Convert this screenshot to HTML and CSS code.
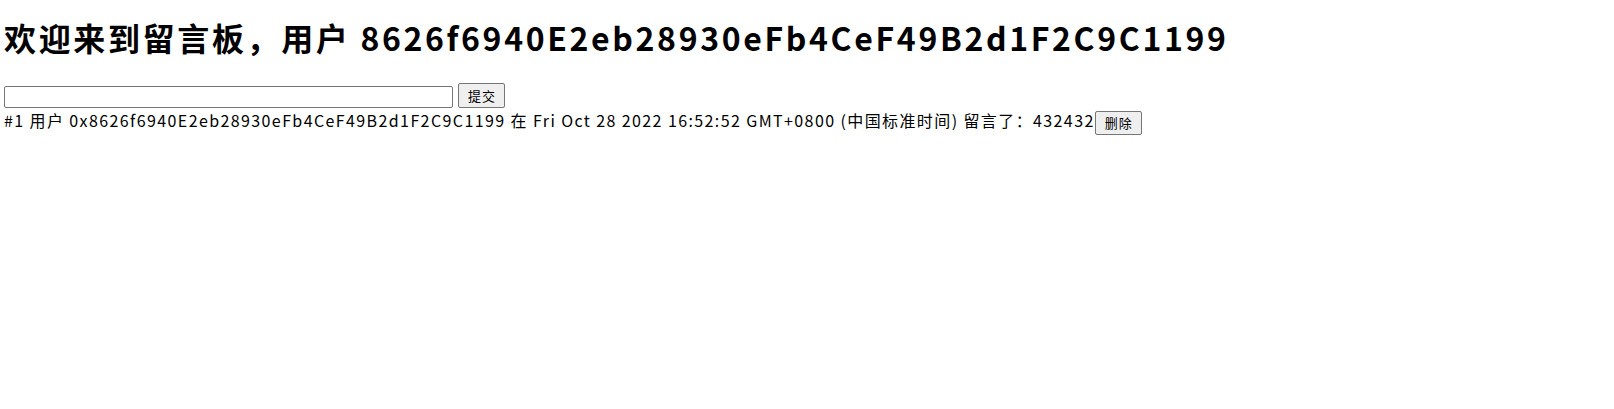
FILE: index.html
```html
<!DOCTYPE html>
<html lang="zh-CN">
<head>
<meta charset="utf-8">
<title>留言板</title>
<link rel="stylesheet" href="styles.css">
</head>
<body>
<h1 class="title">欢迎来到留言板，用户 8626f6940E2eb28930eFb4CeF49B2d1F2C9C1199</h1>
<div class="form-row"><input class="msg-input" type="text"><button class="btn" type="button">提交</button></div>
<div class="msg-list">
<div class="msg">#1 用户 0x8626f6940E2eb28930eFb4CeF49B2d1F2C9C1199 在 Fri Oct 28 2022 16:52:52 GMT+0800 (中国标准时间) 留言了：432432<button class="btn" type="button">删除</button></div>
</div>
</body>
</html>
```
FILE: styles.css
```css
body {
  margin: 4px;
  font-family: "Noto Sans CJK SC", "Noto Sans", sans-serif;
  font-size: 16px;
  color: #000;
  background: #fff;
}
.title {
  font-size: 32px;
  font-weight: bold;
  letter-spacing: 2.65px;
  margin: 11px 0 24px;
  line-height: 44px;
}
.form-row {
  display: flex;
  align-items: flex-end;
  gap: 5px;
}
.msg-input {
  width: 449px;
  height: 22px;
  box-sizing: border-box;
  border: 1px solid #767676;
  border-radius: 2px;
  margin: 0;
  padding: 1px 2px;
}
.btn {
  font-family: "Noto Sans CJK SC", sans-serif;
  font-size: 13px;
  letter-spacing: 1px;
  padding: 0 8px 0 9px;
  border: 1px solid #767676;
  border-radius: 2px;
  background: #efefef;
  margin: 0;
  height: 25px;
}
.msg {
  line-height: 24px;
  letter-spacing: 1.4px;
}
.msg .btn {
  vertical-align: middle;
  height: 24px;
}
```
